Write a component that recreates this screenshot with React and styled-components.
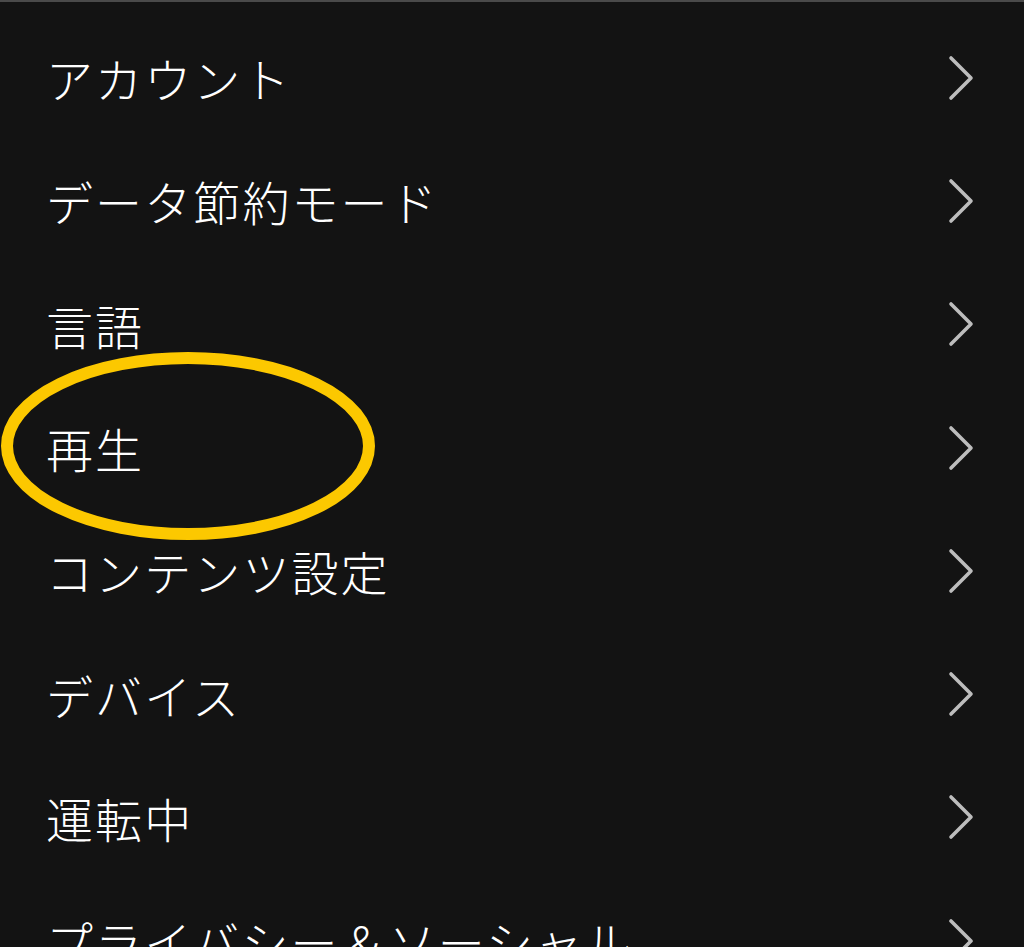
import React from 'react'
import styled, { createGlobalStyle } from 'styled-components'

const Global = createGlobalStyle`
body{
  margin:0;
  background-color:#131313;
}
`

const Main = styled.div`
display:flex;
flex-direction:column;
width:100%;
height:947px;
overflow:hidden;
background-color:#131313;
border-top:2px solid #4a4a4a;
box-sizing:border-box;
padding-top:14px;
`

const Row = styled.div`
position:relative;
display:flex;
flex-direction:row;
justify-content:space-between;
align-items:center;
flex-shrink:0;
height:123.3px;
padding-left:46px;
padding-right:50px;
`

const Label = styled.span`
color:#ffffff;
font-family:"Noto Sans CJK JP", sans-serif;
font-size:47px;
font-weight:300;
letter-spacing:2.1px;
line-height:1;
white-space:nowrap;
`

const Mark = styled.svg`
position:absolute;
left:0;
top:-35px;
pointer-events:none;
`

const Chevron = () => (
  <svg width="26" height="46" viewBox="0 0 26 46">
    <polyline points="3,3 23,23 3,43" fill="none" stroke="#bdbdbd" strokeWidth="3.6" strokeLinecap="round" strokeLinejoin="round" />
  </svg>
)

const items = ['アカウント', 'データ節約モード', '言語', '再生', 'コンテンツ設定', 'デバイス', '運転中', 'プライバシー＆ソーシャル']

const App = () => {
  return (
    <Main>
      <Global />
      {items.map(item => (
        <Row key={item}>
          <Label>{item}</Label>
          <Chevron />
          {item === '再生' && (
            <Mark width="390" height="210" viewBox="0 0 390 210">
              <ellipse cx="188" cy="95" rx="181" ry="88" fill="none" stroke="#fcc800" strokeWidth="12" />
            </Mark>
          )}
        </Row>
      ))}
    </Main>
  )
}

export default App
